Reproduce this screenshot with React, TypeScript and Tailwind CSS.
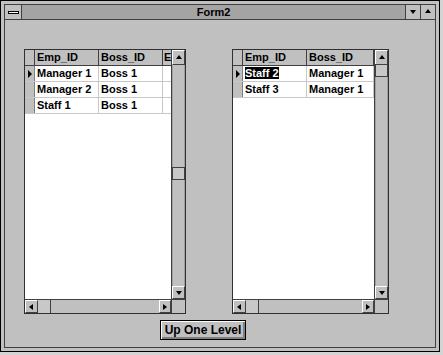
import React from "react";

const font = { fontFamily: '"Liberation Sans", Arial, sans-serif' };

function Tri({ dir }: { dir: "up" | "down" | "left" | "right" }) {
  const pts: Record<string, string> = {
    up: "1,5 4,1 7,5",
    down: "1,2 4,6 7,2",
    left: "5,1 1,4 5,7",
    right: "2,1 6,4 2,7",
  };
  return (
    <svg width="8" height="8" viewBox="0 0 8 8">
      <polygon points={pts[dir]} fill="#000" />
    </svg>
  );
}

function ArrowBtn({ dir, cls }: { dir: "up" | "down" | "left" | "right"; cls: string }) {
  return (
    <div className={`flex items-center justify-center bg-[#c0c0c0] border-t border-l border-t-white border-l-white border-b border-r border-b-[#404040] border-r-[#404040] ${cls}`}>
      <Tri dir={dir} />
    </div>
  );
}

type Row = { a: string; b: string; current?: boolean; sel?: boolean };

function Grid({
  w,
  c1,
  c2,
  extra,
  rows,
  thumbTop,
}: {
  w: string;
  c1: string;
  c2: string;
  extra: boolean;
  rows: Row[];
  thumbTop: string;
}) {
  return (
    <div className={`flex h-[265px] flex-col border border-[#303030] bg-[#c0c0c0] ${w}`}>
      <div className="flex min-h-0 flex-1">
        <div className="flex flex-1 flex-col bg-white">
          <div className="flex h-[16px] border-b border-[#404040] bg-[#c0c0c0] text-[11px] font-bold leading-[15px]">
            <div className="w-[10px] border-r border-[#404040]" />
            <div className={`${c1} border-r border-[#404040] pl-[2px]`}>Emp_ID</div>
            <div className={`${c2} border-r border-[#404040] pl-[2px]`}>Boss_ID</div>
            {extra && <div className="flex-1 overflow-hidden pl-[1px]">E</div>}
          </div>
          {rows.map((r, i) => (
            <div key={i} className="flex h-[16px] border-b border-[#c8c8c8] text-[11px] font-bold leading-[15px]">
              <div className="flex w-[10px] items-center justify-center border-r border-[#808080] bg-[#c0c0c0]">
                {r.current && (
                  <svg width="6" height="8" viewBox="0 0 6 8">
                    <polygon points="1,0 5,4 1,8" fill="#000" />
                  </svg>
                )}
              </div>
              <div className={`${c1} border-r border-[#c8c8c8] pl-[2px]`}>
                <span className={r.sel ? "bg-black text-white" : ""}>{r.a}</span>
              </div>
              <div className={`${c2} border-r border-[#c8c8c8] pl-[2px]`}>{r.b}</div>
              {extra && <div className="flex-1" />}
            </div>
          ))}
          <div className="flex-1" />
        </div>
        <div className="relative flex w-[14px] flex-col border-l border-[#404040] bg-[#c0c0c0]">
          <ArrowBtn dir="up" cls="h-[15px]" />
          <div className="relative flex-1 border-x border-[#a0a0a0]">
            <div className={`absolute left-[-1px] right-[-1px] h-[13px] border border-[#404040] bg-[#c8c8c8] ${thumbTop}`} />
          </div>
          <ArrowBtn dir="down" cls="h-[13px]" />
        </div>
      </div>
      <div className="flex h-[14px] border-t border-[#404040]">
        <div className="flex flex-1">
          <ArrowBtn dir="left" cls="w-[13px]" />
          <div className="w-[13px] border-r border-[#404040] bg-[#c8c8c8]" />
          <div className="flex-1 bg-[#c0c0c0]" />
          <ArrowBtn dir="right" cls="w-[12px]" />
        </div>
        <div className="w-[14px] border-l border-[#404040] bg-[#c0c0c0]" />
      </div>
    </div>
  );
}

export default function App() {
  return (
    <div className="h-[355px] w-[443px] bg-[#d4d4d4]" style={font}>
      <div className="flex h-[352px] w-[440px] flex-col border border-black bg-[#c0c0c0] p-[3px]">
        <div className="flex flex-1 flex-col border border-[#404040]">
          <div className="flex h-[15px] border-b border-[#404040] bg-[#a4a4a4]">
            <div className="flex w-[17px] items-center justify-center border-r border-[#404040] bg-[#c0c0c0]">
              <div className="h-[3px] w-[11px] border border-black bg-white" />
            </div>
            <div className="flex-1 text-center text-[11px] font-bold leading-[14px] text-black">Form2</div>
            <div className="flex w-[15px] items-center justify-center border-l border-[#404040] bg-[#c0c0c0]">
              <Tri dir="down" />
            </div>
            <div className="flex w-[15px] items-center justify-center border-l border-[#404040] bg-[#c0c0c0]">
              <Tri dir="up" />
            </div>
          </div>
          <div className="flex flex-1 flex-col bg-[#c0c0c0] pl-[19px] pt-[29px]">
            <div className="flex gap-[46px]">
              <Grid
                w="w-[162px]"
                c1="w-[64px]"
                c2="w-[64px]"
                extra={true}
                thumbTop="top-[102px]"
                rows={[
                  { a: "Manager 1", b: "Boss 1", current: true },
                  { a: "Manager 2", b: "Boss 1" },
                  { a: "Staff 1", b: "Boss 1" },
                ]}
              />
              <Grid
                w="w-[157px]"
                c1="w-[64px]"
                c2="w-[67px]"
                extra={false}
                thumbTop="top-[-1px]"
                rows={[
                  { a: "Staff 2", b: "Manager 1", current: true, sel: true },
                  { a: "Staff 3", b: "Manager 1" },
                ]}
              />
            </div>
            <div className="mt-[6px] flex">
              <div className="ml-[136px] flex h-[20px] w-[86px] items-center justify-center border border-black bg-[#c0c0c0] text-[12px] font-bold shadow-[inset_1px_1px_0_#fff,inset_-2px_-2px_0_#808080]">
                Up One Level
              </div>
            </div>
          </div>
        </div>
      </div>
    </div>
  );
}
